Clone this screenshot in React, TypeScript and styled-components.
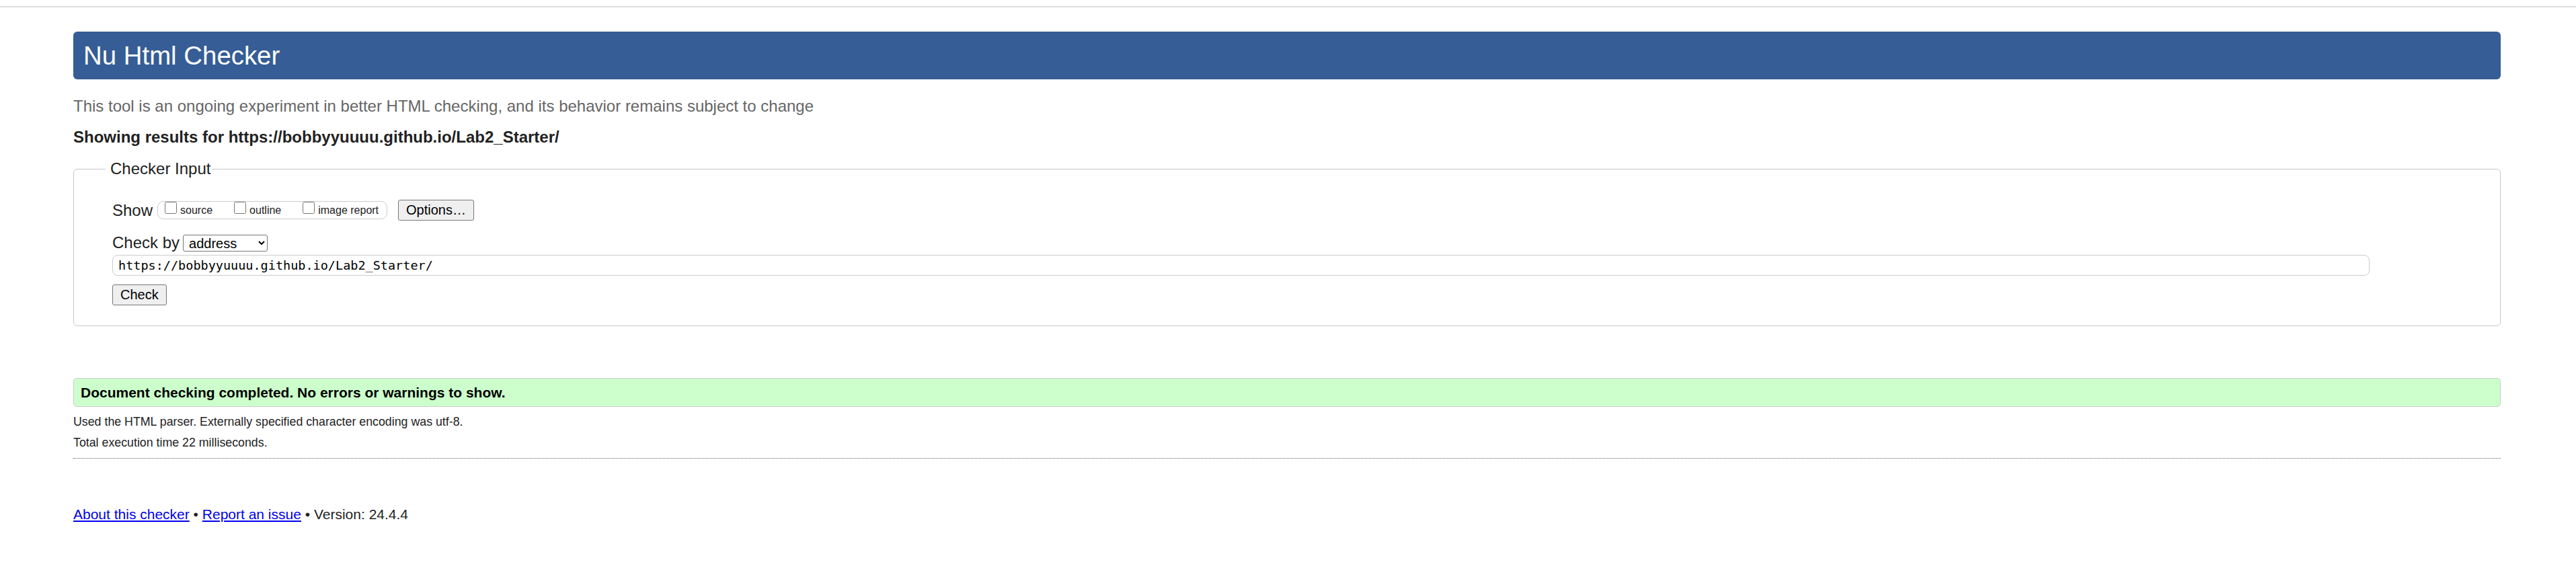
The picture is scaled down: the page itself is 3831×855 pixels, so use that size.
import styled, { createGlobalStyle } from "styled-components";

const GlobalStyle = createGlobalStyle`
  html, body {
    margin: 0;
    padding: 0;
    background: #fff;
  }
  body {
    font-family: "Liberation Sans", Arial, Helvetica, sans-serif;
    color: #222;
  }
`;

const showOptions = ["source", "outline", "image report"];

const App = () => {
  return (
    <>
      <GlobalStyle />
      <TopRule />
      <Page>
        <Title>Nu Html Checker</Title>
        <Tagline>
          This tool is an ongoing experiment in better HTML checking, and its
          behavior remains subject to change
        </Tagline>
        <ResultsFor>
          Showing results for https://bobbyyuuuu.github.io/Lab2_Starter/
        </ResultsFor>

        <InputFieldset>
          <Legend>Checker Input</Legend>
          <FormBody>
            <Row>
              <RowLabel $gap={7}>Show</RowLabel>
              <ShowGroup>
                {showOptions.map((name) => (
                  <ShowOption key={name}>
                    <Checkbox type="checkbox" />
                    <OptionText>{name}</OptionText>
                  </ShowOption>
                ))}
              </ShowGroup>
              <Button $left={16}>Options…</Button>
            </Row>
            <Row $top={19}>
              <RowLabel $gap={5}>Check by</RowLabel>
              <Select defaultValue="address">
                <option value="address">address</option>
                <option value="file">file upload</option>
                <option value="text">text input</option>
              </Select>
            </Row>
            <UrlInput
              type="url"
              defaultValue="https://bobbyyuuuu.github.io/Lab2_Starter/"
            />
            <SubmitRow>
              <Button>Check</Button>
            </SubmitRow>
          </FormBody>
        </InputFieldset>

        <Success>
          Document checking completed. No errors or warnings to show.
        </Success>
        <Details $top={12}>
          Used the HTML parser. Externally specified character encoding was
          utf-8.
        </Details>
        <Details $top={10}>Total execution time 22 milliseconds.</Details>
        <Divider />

        <Footer>
          <FooterLink href="#">About this checker</FooterLink> •{" "}
          <FooterLink href="#">Report an issue</FooterLink> • Version: 24.4.4
        </Footer>
      </Page>
    </>
  );
};

const TopRule = styled.div`
  margin-top: 9px;
  height: 2px;
  background: #e0e0e0;
`;

const Page = styled.main`
  padding: 0 112px 40px 109px;
`;

const Title = styled.h1`
  margin: 36px 0 0;
  padding: 13px 15px;
  background: #365d95;
  border-radius: 6px;
  color: #fff;
  font-size: 38.4px;
  font-weight: normal;
  line-height: 45px;
`;

const Tagline = styled.p`
  margin: 26px 0 0;
  font-size: 24px;
  line-height: 28px;
  color: #666;
`;

const ResultsFor = styled.p`
  margin: 18px 0 0;
  font-size: 24px;
  line-height: 28px;
  font-weight: bold;
  color: #222;
`;

const InputFieldset = styled.fieldset`
  margin: 19px 0 0;
  padding: 32px 0 30px 47px;
  border: 1px solid #c8c8c8;
  border-radius: 6px;
`;

const Legend = styled.legend`
  padding: 0 2px 0 7px;
  font-size: 24px;
  line-height: 28px;
  color: #222;
`;

const FormBody = styled.div`
  padding-left: 10px;
`;

const Row = styled.div<{ $top?: number }>`
  display: flex;
  align-items: center;
  margin-top: ${(p) => p.$top ?? 0}px;
  min-height: 28px;
`;

const RowLabel = styled.span<{ $gap: number }>`
  font-size: 24px;
  line-height: 28px;
  margin-right: ${(p) => p.$gap}px;
`;

const ShowGroup = styled.div`
  box-sizing: border-box;
  display: inline-flex;
  align-items: flex-start;
  height: 27px;
  padding: 0 12px 0 10px;
  border: 1px solid #cccccc;
  border-radius: 9px;
`;

const ShowOption = styled.label`
  display: flex;
  align-items: flex-start;
  margin-right: 32px;

  &:last-child {
    margin-right: 0;
  }
`;

const Checkbox = styled.input`
  width: 18px;
  height: 18px;
  margin: 0 5px 0 0;
`;

const OptionText = styled.span`
  margin-top: 3.5px;
  font-size: 16px;
  line-height: 18px;
`;

const Button = styled.button<{ $left?: number }>`
  box-sizing: border-box;
  height: 31px;
  margin-left: ${(p) => p.$left ?? 0}px;
  padding: 0 11px;
  border: 1px solid #767676;
  border-radius: 3px;
  background: #efefef;
  color: #000;
  font-family: "Liberation Sans", Arial, sans-serif;
  font-size: 20px;
  line-height: 29px;
`;

const Select = styled.select`
  box-sizing: border-box;
  width: 126px;
  height: 25px;
  padding: 0 0 0 4px;
  border: 1px solid #767676;
  border-radius: 3px;
  background: #fff;
  color: #000;
  font-family: "Liberation Sans", Arial, sans-serif;
  font-size: 20px;
`;

const UrlInput = styled.input`
  display: block;
  box-sizing: border-box;
  width: 3357px;
  height: 31px;
  margin-top: 4px;
  padding: 0 8px;
  border: 1px solid #cccccc;
  border-radius: 8px;
  color: #000;
  font-family: "DejaVu Sans Mono", "Liberation Mono", monospace;
  font-size: 18.5px;
`;

const SubmitRow = styled.div`
  margin-top: 13px;
  display: flex;
`;

const Success = styled.div`
  margin-top: 77px;
  padding: 8.5px 10px;
  border: 1px solid #cccccc;
  border-radius: 5px;
  background: #ccffcc;
  color: #000;
  font-size: 21px;
  font-weight: bold;
  line-height: 24px;
`;

const Details = styled.p<{ $top: number }>`
  margin: ${(p) => p.$top}px 0 0;
  font-size: 17.8px;
  line-height: 21px;
  color: #222;
`;

const Divider = styled.hr`
  margin: 12px 0 0;
  border: 0;
  border-top: 1px dotted #666;
`;

const Footer = styled.p`
  margin: 71px 0 0;
  font-size: 21px;
  line-height: 24px;
  color: #222;
`;

const FooterLink = styled.a`
  color: #0000ee;
  text-decoration: underline;
`;

export default App;
